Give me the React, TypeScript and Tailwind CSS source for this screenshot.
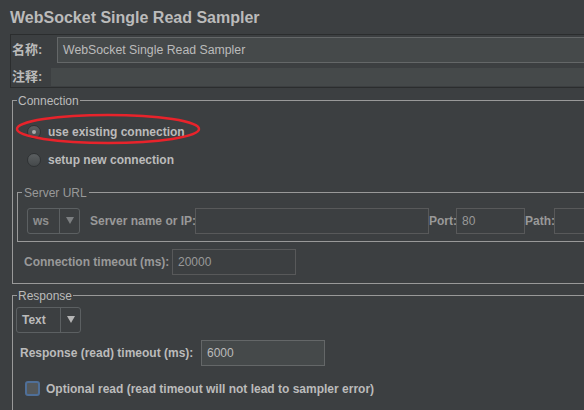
import { ReactNode } from "react"

const Arrow = ({ color }: { color: string }) => (
  <svg width="8" height="7" viewBox="0 0 8 7">
    <polygon points="0,0 8,0 4,7" fill={color} />
  </svg>
)

function Combo({ value, width, disabled }: { value: string; width: string; disabled?: boolean }) {
  const text = disabled ? "text-[#8f8f8f]" : "text-[#bbbbbb]"
  return (
    <div className={`flex h-[26px] shrink-0 ${width} rounded-[3px] border border-[#5c6062]`}>
      <div className={`flex flex-1 items-center pl-[5px] font-bold ${text}`}>{value}</div>
      <div className="flex w-[20px] items-center justify-center border-l border-[#5c6062]">
        <Arrow color={disabled ? "#7c7f81" : "#b5b5b5"} />
      </div>
    </div>
  )
}

function Radio({ checked, label }: { checked?: boolean; label: string }) {
  return (
    <div className="flex h-[28px] items-center">
      <div className="ml-[14px] flex h-[14px] w-[14px] items-center justify-center rounded-full border border-[#2f3234] bg-gradient-to-b from-[#5b5f61] to-[#45494b]">
        {checked && <div className="h-[4px] w-[4px] rounded-full bg-[#a9a9a9]" />}
      </div>
      <span className="ml-[7px] font-bold">{label}</span>
    </div>
  )
}

function Group({ title, className, legendClass, children }: { title: string; className: string; legendClass?: string; children: ReactNode }) {
  return (
    <fieldset className={`border border-[#999999] p-0 ${className}`}>
      <legend className={`ml-[4px] px-[1px] leading-[14px] ${legendClass ?? ""}`}>{title}</legend>
      {children}
    </fieldset>
  )
}

export default function App() {
  return (
    <div className="relative h-[410px] w-[584px] overflow-hidden whitespace-nowrap bg-[#3c3f41] font-['Liberation_Sans','Noto_Sans_CJK_SC',sans-serif] text-[12px] text-[#bbbbbb]">
      <div className="w-[660px]">
        <div className="h-[34px] pl-[10px] pt-[8px] text-[16px] font-bold leading-[20px]">WebSocket Single Read Sampler</div>

        <div className="ml-[10px] border border-[#2b2d2e] pl-[1px]">
          <div className="flex items-center pt-[2px]">
            <div className="w-[45px] shrink-0 text-[13px] font-bold">名称:</div>
            <div className="flex h-[26px] flex-1 items-center border border-[#646768] bg-[#45494a] pl-[5px] text-[12.3px]">WebSocket Single Read Sampler</div>
          </div>
          <div className="mt-[4px] flex items-center">
            <div className="w-[39px] shrink-0 text-[13px] font-bold">注释:</div>
            <div className="h-[18px] flex-1 bg-[#45494a]" />
          </div>
        </div>

        <Group title="Connection" className="ml-[12px] mt-[6px]">
          <div className="pt-[10px]">
            <Radio checked label="use existing connection" />
            <Radio label="setup new connection" />
          </div>

          <Group title="Server URL" className="ml-[4px] mt-[12px] text-[#999999]" legendClass="px-[2px]">
            <div className="flex items-center pb-[7px] pl-[9px] pt-[8px]">
              <Combo value="ws" width="w-[53px]" disabled />
              <div className="ml-[10px] w-[105px] shrink-0 font-bold">Server name or IP:</div>
              <div className="h-[26px] w-[234px] shrink-0 border border-[#58595a]" />
              <div className="w-[27px] shrink-0 font-bold">Port:</div>
              <div className="flex h-[26px] w-[69px] shrink-0 items-center border border-[#58595a] pl-[5px]">80</div>
              <div className="w-[29px] shrink-0 font-bold">Path:</div>
              <div className="h-[26px] w-[100px] shrink-0 border border-[#58595a]" />
            </div>
          </Group>

          <div className="flex items-center pb-[8px] pl-[11px] pt-[7px] text-[#999999]">
            <div className="w-[148px] shrink-0 font-bold">Connection timeout (ms):</div>
            <div className="flex h-[26px] w-[124px] shrink-0 items-center border border-[#58595a] pl-[5px]">20000</div>
          </div>
        </Group>

        <Group title="Response" className="ml-[12px] mt-[5px]">
          <div className="pl-[3px] pt-[4px]">
            <Combo value="Text" width="w-[65px]" />
          </div>
          <div className="flex items-center pl-[7px] pt-[7px]">
            <div className="w-[181px] shrink-0 font-bold">Response (read) timeout (ms):</div>
            <div className="flex h-[26px] w-[124px] shrink-0 items-center border border-[#646768] bg-[#45494a] pl-[5px]">6000</div>
          </div>
          <div className="flex h-[46px] items-center pl-[12px]">
            <div className="h-[15px] w-[15px] rounded-[3px] border-2 border-[#4f6f98] bg-[#54585a]" />
            <span className="ml-[6px] font-bold">Optional read (read timeout will not lead to sampler error)</span>
          </div>
        </Group>
      </div>

      <svg className="absolute left-[15px] top-[113px]" width="186" height="32" viewBox="0 0 186 32">
        <ellipse cx="93" cy="16" rx="91" ry="14" fill="none" stroke="#e8232b" strokeWidth="2.5" />
      </svg>
    </div>
  )
}
